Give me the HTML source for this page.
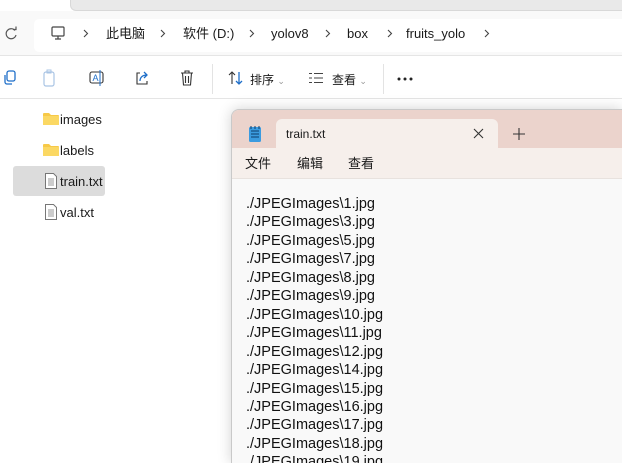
<!DOCTYPE html>
<html style="width:622px;height:463px;overflow:hidden"><head><meta charset="utf-8"><style>
*{margin:0;padding:0;box-sizing:border-box}
body{width:622px;height:463px;overflow:hidden;background:#fff;font-family:"Liberation Sans","Noto Sans CJK SC",sans-serif;position:relative;color:#1a1a1a}
.abs{position:absolute}
.t{font-size:13px;white-space:nowrap;line-height:16px}
</style></head><body>
<div class="abs" style="left:0;top:0;width:622px;height:12px;background:#fff"></div>
<div class="abs" style="left:70px;top:0;width:560px;height:11px;background:#e9e9e9;border-left:1px solid #d8d8d8;border-bottom:1px solid #d8d8d8;border-bottom-left-radius:6px"></div>
<div class="abs" style="left:0;top:11px;width:622px;height:45px;background:#f9f9f9"></div>
<div class="abs" style="left:34px;top:19px;width:600px;height:33px;background:#fff;border-radius:5px"></div>
<svg class="abs" style="left:3px;top:26px" width="16" height="16" viewBox="0 0 16 16"><path d="M12 4.5A5 5 0 1 0 13 9" fill="none" stroke="#555" stroke-width="1.2"/><path d="M10 3.5h3v-3" fill="none" stroke="#555" stroke-width="1.2"/></svg>
<svg class="abs" style="left:50px;top:25px" width="16" height="16" viewBox="0 0 16 16"><rect x="2" y="2" width="12" height="9" rx="1" fill="none" stroke="#444" stroke-width="1.2"/><path d="M8 11v3M5 14h6" stroke="#444" stroke-width="1.2"/></svg>
<svg class="abs" style="left:0;top:0" width="622" height="60" viewBox="0 0 622 60"><g fill="none" stroke="#444" stroke-width="1.1"><path d="M84 30l3.5 3.5L84 37"/><path d="M161 30l3.5 3.5L161 37"/><path d="M250 30l3.5 3.5L250 37"/><path d="M326 30l3.5 3.5L326 37"/><path d="M388 30l3.5 3.5L388 37"/><path d="M485 30l3.5 3.5L485 37"/></g></svg>
<div class="abs t" style="left:106px;top:26px">此电脑</div>
<div class="abs t" style="left:183px;top:26px">软件 (D:)</div>
<div class="abs t" style="left:271px;top:26px">yolov8</div>
<div class="abs t" style="left:347px;top:26px">box</div>
<div class="abs t" style="left:406px;top:26px">fruits_yolo</div>
<div class="abs" style="left:0;top:55px;width:622px;height:1px;background:#e5e5e5"></div>
<svg class="abs" style="left:3px;top:70px" width="15" height="16" viewBox="0 0 15 16"><rect x="4" y="1" width="8" height="10" rx="2" fill="none" stroke="#1f6fc9" stroke-width="1.3"/><path d="M2 5v7a2 2 0 0 0 2 2h5" fill="none" stroke="#1f6fc9" stroke-width="1.3"/></svg>
<svg class="abs" style="left:41px;top:69px" width="16" height="18" viewBox="0 0 16 18"><rect x="3" y="3" width="10" height="14" rx="2" fill="none" stroke="#a9c4e4" stroke-width="1.2"/><rect x="6" y="1" width="4" height="3" fill="none" stroke="#a9c4e4"/></svg>
<svg class="abs" style="left:88px;top:69px" width="18" height="18" viewBox="0 0 18 18"><rect x="2" y="3" width="13" height="11" rx="2" fill="none" stroke="#333" stroke-width="1.1"/><text x="4.5" y="12" font-size="9" fill="#1f6fc9" font-family="Liberation Sans">A</text><path d="M12 1v16" stroke="#1f6fc9"/></svg>
<svg class="abs" style="left:134px;top:70px" width="17" height="16" viewBox="0 0 17 16"><path d="M6 3H3v11h10v-3" fill="none" stroke="#333" stroke-width="1.1"/><path d="M6 11c0-4 3-6 7-6M10 2l3 3-3 3" fill="none" stroke="#1f6fc9" stroke-width="1.3"/></svg>
<svg class="abs" style="left:179px;top:69px" width="16" height="18" viewBox="0 0 16 18"><path d="M2 4h12M6 4V2h4v2M3.5 4l1 12h7l1-12M6.5 7v7M9.5 7v7" fill="none" stroke="#333" stroke-width="1.1"/></svg>
<div class="abs" style="left:212px;top:64px;width:1px;height:30px;background:#e3e3e3"></div>
<svg class="abs" style="left:227px;top:70px" width="18" height="16" viewBox="0 0 18 16"><path d="M5 14V2M2 5l3-3 3 3" fill="none" stroke="#333" stroke-width="1.1"/><path d="M12 2v12M9 11l3 3 3-3" fill="none" stroke="#1f6fc9" stroke-width="1.3"/></svg>
<div class="abs" style="left:250px;top:71px;font-size:12px">排序 <span style="color:#999;font-size:9px">⌄</span></div>
<svg class="abs" style="left:308px;top:72px" width="16" height="12" viewBox="0 0 16 12"><path d="M1 1.5h3M6 1.5h9M1 6h3M6 6h9M1 10.5h3M6 10.5h9" stroke="#444" stroke-width="1.1"/></svg>
<div class="abs" style="left:332px;top:71px;font-size:12px">查看 <span style="color:#999;font-size:9px">⌄</span></div>
<div class="abs" style="left:383px;top:64px;width:1px;height:30px;background:#e3e3e3"></div>
<svg class="abs" style="left:396px;top:76px" width="18" height="6" viewBox="0 0 18 6"><circle cx="3" cy="3" r="1.5" fill="#222"/><circle cx="9" cy="3" r="1.5" fill="#222"/><circle cx="15" cy="3" r="1.5" fill="#222"/></svg>
<div class="abs" style="left:0;top:98px;width:622px;height:1px;background:#e5e5e5"></div>
<svg class="abs" style="left:43px;top:112px" width="16" height="14" viewBox="0 0 16 14"><path d="M0 2a1 1 0 0 1 1-1h5l2 2h7a1 1 0 0 1 1 1v9H0z" fill="#f7c948"/><path d="M0 4h16v9H0z" fill="#fbd863"/></svg>
<div class="abs t" style="left:60px;top:112px">images</div>
<svg class="abs" style="left:43px;top:143px" width="16" height="14" viewBox="0 0 16 14"><path d="M0 2a1 1 0 0 1 1-1h5l2 2h7a1 1 0 0 1 1 1v9H0z" fill="#f7c948"/><path d="M0 4h16v9H0z" fill="#fbd863"/></svg>
<div class="abs t" style="left:60px;top:143px">labels</div>
<div class="abs" style="left:13px;top:166px;width:92px;height:30px;background:#dcdcdc;border-radius:3px"></div>
<svg class="abs" style="left:45px;top:173px" width="12" height="16" viewBox="0 0 12 16"><path d="M.5.5h8l3 3v12H.5z" fill="#fff" stroke="#777"/><path d="M3 6h6M3 8h6M3 10h6M3 12h6" stroke="#999"/></svg>
<div class="abs t" style="left:60px;top:174px">train.txt</div>
<svg class="abs" style="left:45px;top:204px" width="12" height="16" viewBox="0 0 12 16"><path d="M.5.5h8l3 3v12H.5z" fill="#fff" stroke="#777"/><path d="M3 6h6M3 8h6M3 10h6M3 12h6" stroke="#999"/></svg>
<div class="abs t" style="left:60px;top:205px">val.txt</div>
<div class="abs" style="left:231px;top:109px;width:391px;height:354px;background:#f9f9f9;border-left:1px solid #c9c9c9;border-top:1px solid #c9c9c9;border-radius:8px 0 0 0;box-shadow:0 0 14px rgba(0,0,0,.18);overflow:hidden">
 <div class="abs" style="left:0;top:0;width:400px;height:38px;background:#ebd3cc"></div>
 <div class="abs" style="left:44px;top:9px;width:222px;height:30px;background:#f6efeb;border-radius:6px 6px 0 0"></div>
 <svg class="abs" style="left:16px;top:15px" width="14" height="18" viewBox="0 0 14 18"><rect x="1" y="2" width="12" height="15" rx="1.5" fill="#3b9be0"/><path d="M3 6h8M3 9h8M3 12h8" stroke="#0c3e6b"/><path d="M3 1v3M7 1v3M11 1v3" stroke="#0c3e6b"/></svg>
 <div class="abs t" style="left:54px;top:16px;font-size:12px">train.txt</div>
 <svg class="abs" style="left:241px;top:18px" width="11" height="11" viewBox="0 0 11 11"><path d="M1 1l9 9M10 1l-9 9" stroke="#333" stroke-width="1.1"/></svg>
 <svg class="abs" style="left:281px;top:18px" width="12" height="12" viewBox="0 0 12 12"><path d="M6 0v12M0 6h12" stroke="#333" stroke-width="1.1"/></svg>
 <div class="abs" style="left:0;top:38px;width:400px;height:31px;background:#f6efeb;border-bottom:1px solid #e8e2de"></div>
 <div class="abs t" style="left:13px;top:46px">文件</div>
 <div class="abs t" style="left:65px;top:46px">编辑</div>
 <div class="abs t" style="left:116px;top:46px">查看</div>
 <div class="abs" style="left:14px;top:85px;font-size:14.5px;line-height:18.46px;color:#111;white-space:pre">./JPEGImages\1.jpg
./JPEGImages\3.jpg
./JPEGImages\5.jpg
./JPEGImages\7.jpg
./JPEGImages\8.jpg
./JPEGImages\9.jpg
./JPEGImages\10.jpg
./JPEGImages\11.jpg
./JPEGImages\12.jpg
./JPEGImages\14.jpg
./JPEGImages\15.jpg
./JPEGImages\16.jpg
./JPEGImages\17.jpg
./JPEGImages\18.jpg
./JPEGImages\19.jpg</div>
</div>
</body></html>
